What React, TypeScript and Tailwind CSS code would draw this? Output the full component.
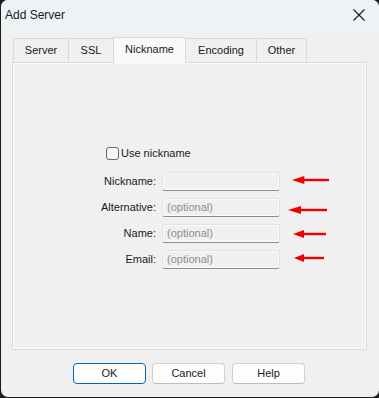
import React from "react";

const tabs = [
  { name: "Server", cls: "w-[55px] border-l border-t" },
  { name: "SSL", cls: "w-[45px] border-l border-t" },
  { name: "Nickname", cls: "w-[73px] border-l border-t border-r" },
  { name: "Encoding", cls: "w-[70px] border-t" },
  { name: "Other", cls: "w-[51px] border-l border-t border-r" },
];

const fields = [
  { label: "Nickname:", placeholder: "" },
  { label: "Alternative:", placeholder: "(optional)" },
  { label: "Name:", placeholder: "(optional)" },
  { label: "Email:", placeholder: "(optional)" },
];

// annotation arrows, drawn over the panel
const arrows = [
  { top: "top-[113px]", left: "left-[279px]", width: "w-[37px]" },
  { top: "top-[143px]", left: "left-[275px]", width: "w-[39px]" },
  { top: "top-[167px]", left: "left-[280px]", width: "w-[33px]" },
  { top: "top-[191px]", left: "left-[281px]", width: "w-[30px]" },
];

function RedArrow({ className }: { className: string }) {
  return (
    <svg className={`absolute h-[8px] ${className}`} viewBox="0 0 36 8" preserveAspectRatio="none">
      <polygon points="0,4 12,0 12,8" fill="#f00000" />
      <rect x="10" y="2.8" width="26" height="2.4" fill="#f00000" />
    </svg>
  );
}

export default function App() {
  return (
    <div
      className="w-[379px] h-[398px] bg-[#1c1c1c] text-[11px] text-[#1a1a1a]"
      style={{ fontFamily: '"Liberation Sans", Arial, sans-serif' }}
    >
      <div className="flex flex-col w-[378px] h-[397px] ml-[1px] rounded-[7px] overflow-hidden bg-[#f0f0f0]">
        {/* Title bar */}
        <div className="flex items-center justify-between h-[29px] shrink-0 bg-[#eef2f5] pl-[4px] pr-[14px]">
          <span className="text-[12px] text-[#1a1a1a]">Add Server</span>
          <svg width="12" height="12" viewBox="0 0 12 12">
            <path d="M0.5 0.5 L11.5 11.5 M11.5 0.5 L0.5 11.5" stroke="#1a1a1a" strokeWidth="1.1" />
          </svg>
        </div>

        {/* Body */}
        <div className="flex flex-col pl-[11px] pr-[12px] pt-[8px]">
          {/* Tabs */}
          <div className="flex items-end h-[25px] pl-[1px] relative z-10">
            {tabs.map((t) => {
              const active = t.name === "Nickname";
              return (
                <div
                  key={t.name}
                  className={`flex items-center justify-center border-[#d9d9d9] ${t.cls} ${
                    active ? "h-[26px] -mb-[1px] bg-[#f9f9f9] pb-[3px]" : "h-[24px] bg-[#f0f0f0]"
                  }`}
                >
                  {t.name}
                </div>
              );
            })}
          </div>

          {/* Panel */}
          <div className="relative h-[288px] border border-[#d9d9d9] bg-[#f0f0f0] shadow-[inset_0_0_0_1px_#fafafa] pl-[87px] pt-[84px]">
            <label className="flex items-center h-[13px] ml-[6px] gap-[2px]">
              <span className="w-[13px] h-[13px] rounded-[3px] border border-[#6b6b6b] bg-[#f6f6f6]" />
              <span>Use nickname</span>
            </label>

            <div className="grid grid-cols-[56px_118px] gap-x-[6px] gap-y-[7px] mt-[12px]">
              {fields.map((f) => (
                <React.Fragment key={f.label}>
                  <div className="flex items-center justify-end h-[19px]">{f.label}</div>
                  <div className="flex items-center h-[19px] rounded-[3px] border border-[#e2e2e2] border-b-[#8b8b8b] bg-[#f0f0f0] shadow-[inset_0_0_0_1px_#fbfbfb] px-[4px] text-[#8e8e8e]">
                    {f.placeholder}
                  </div>
                </React.Fragment>
              ))}
            </div>

            {arrows.map((a, i) => (
              <RedArrow key={i} className={`${a.top} ${a.left} ${a.width}`} />
            ))}
          </div>
        </div>

        {/* Buttons */}
        <div className="flex gap-[6px] mt-[13px] pl-[72px]">
          <button className="w-[73px] h-[21px] rounded-[4px] border border-[#0067c0] bg-[#fdfdfd]">OK</button>
          <button className="w-[73px] h-[21px] rounded-[4px] border border-[#d0d0d0] border-b-[#bdbdbd] bg-[#fdfdfd]">
            Cancel
          </button>
          <button className="w-[73px] h-[21px] ml-[1px] rounded-[4px] border border-[#d0d0d0] border-b-[#bdbdbd] bg-[#fdfdfd]">
            Help
          </button>
        </div>
      </div>
    </div>
  );
}
